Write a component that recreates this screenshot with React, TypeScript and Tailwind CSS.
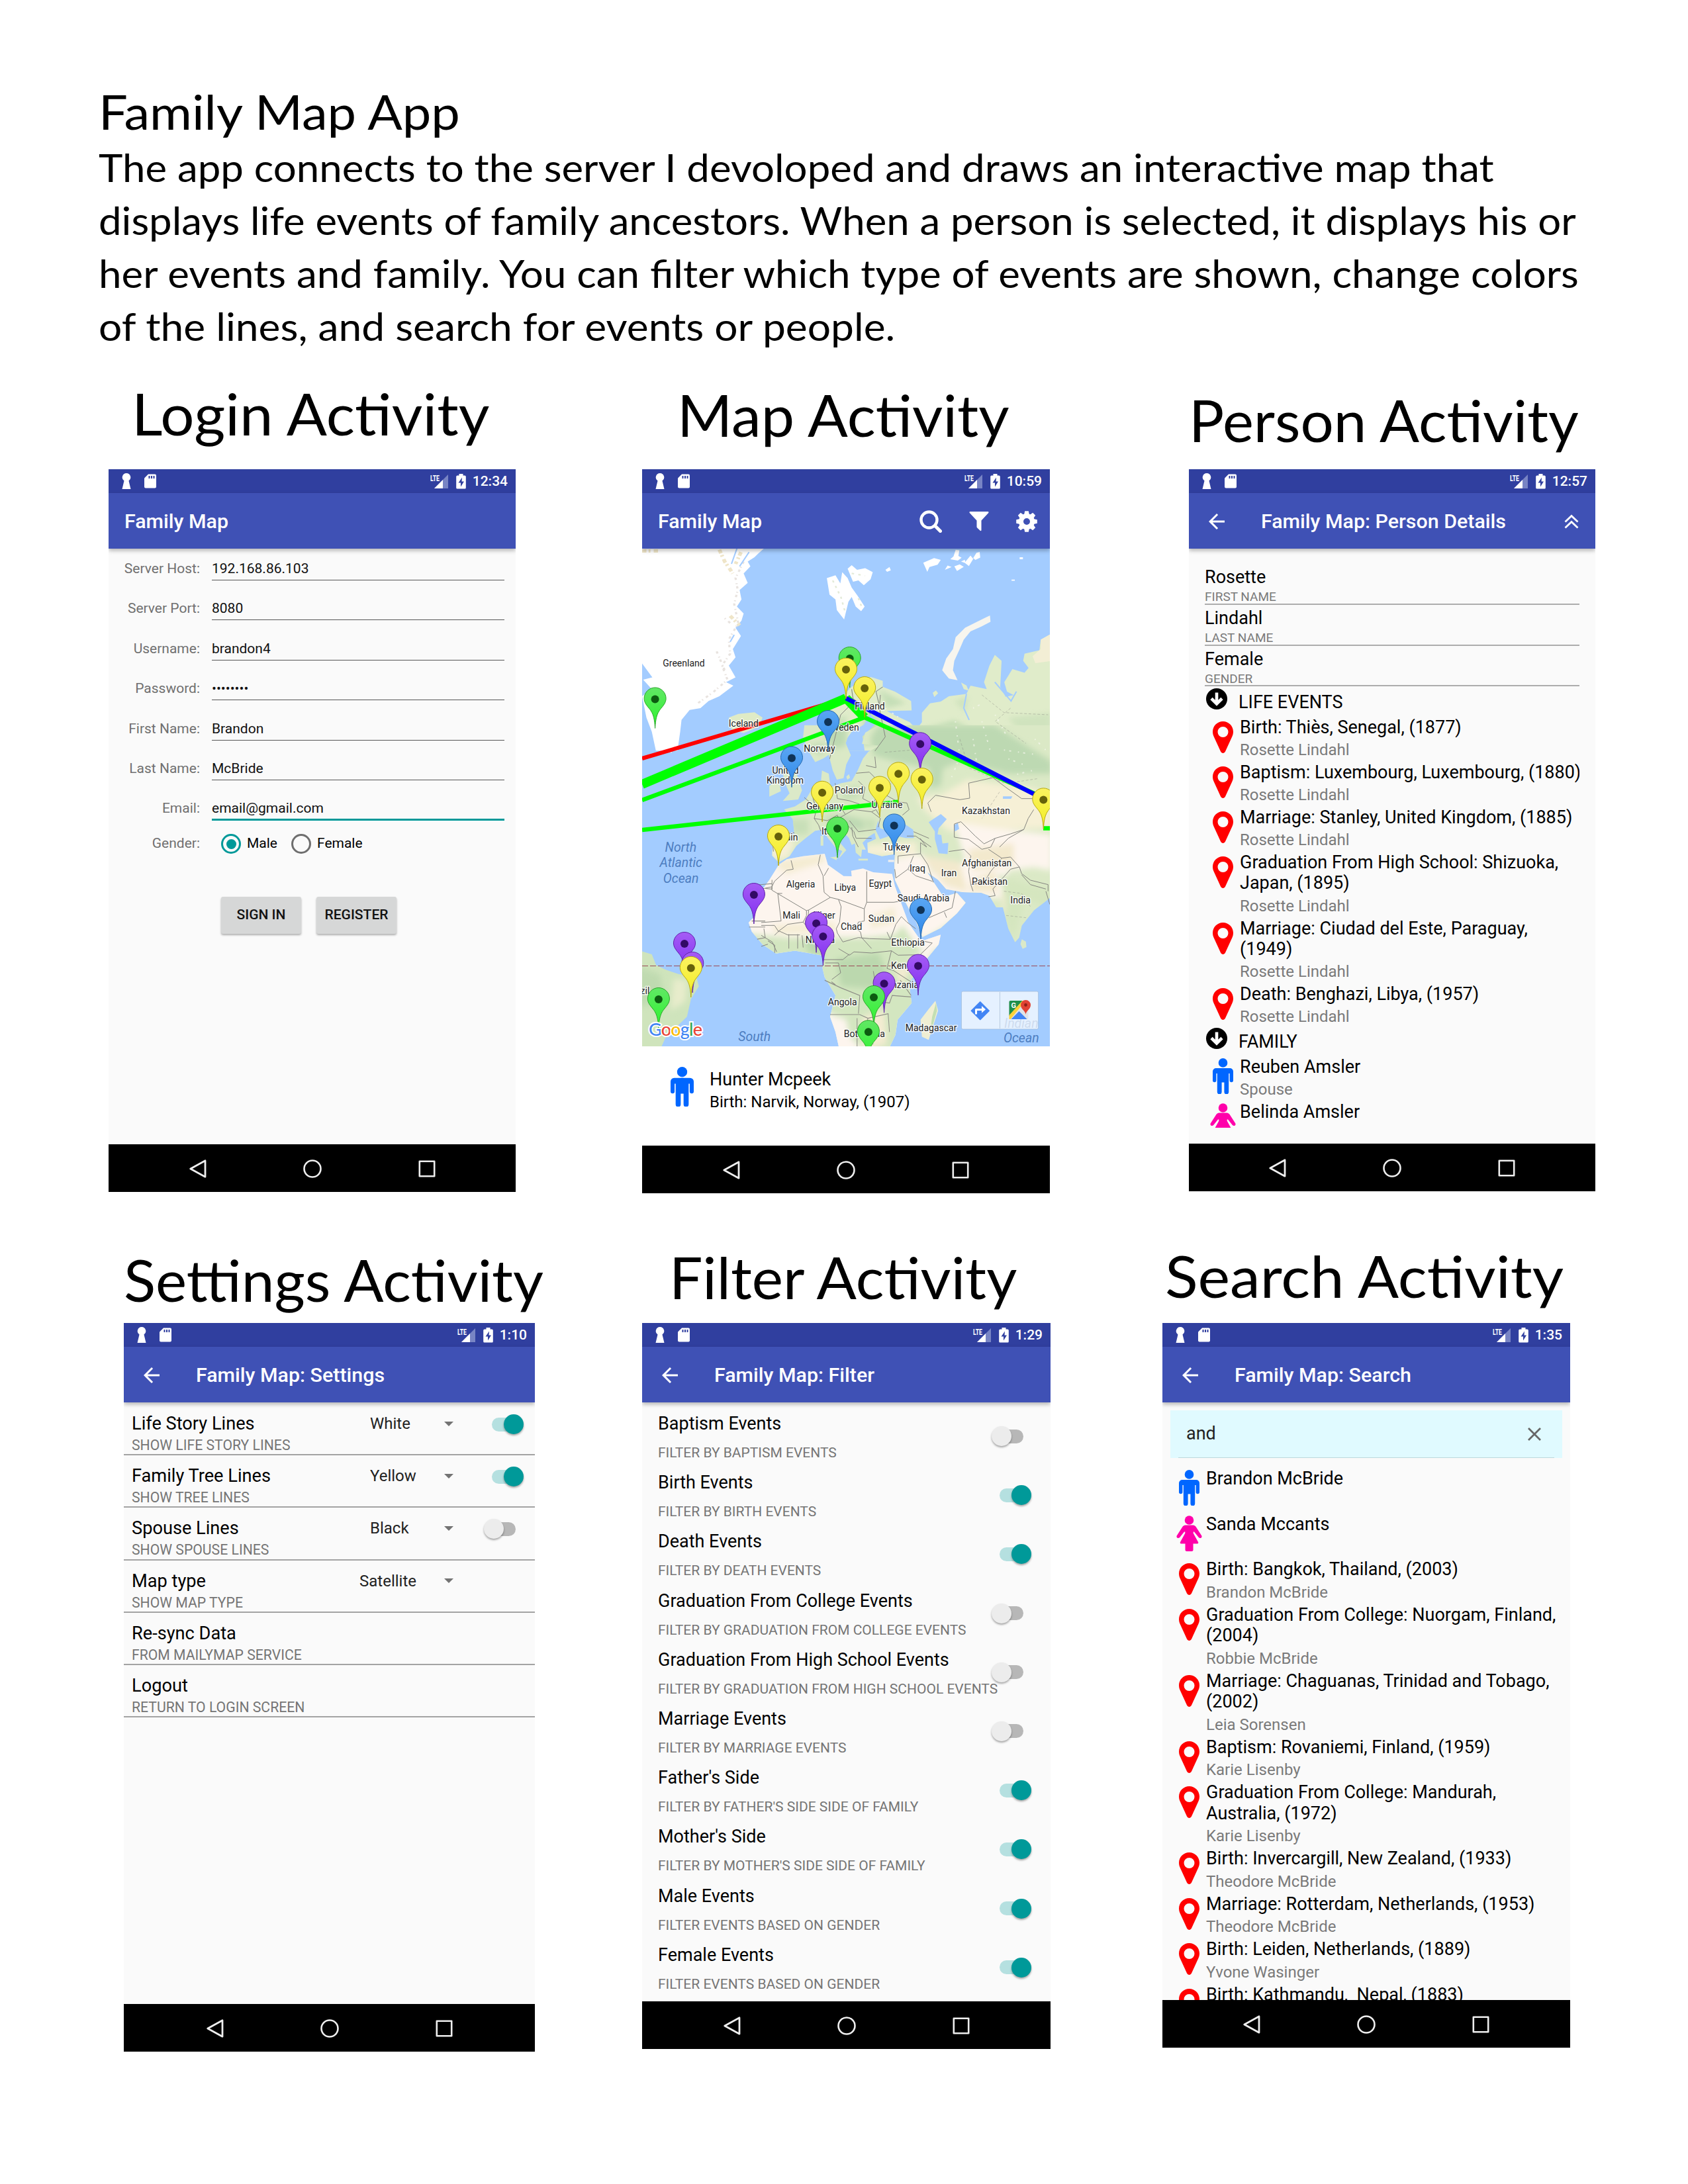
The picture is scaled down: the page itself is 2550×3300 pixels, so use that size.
import { useLayoutEffect, useRef, useState, type ReactNode } from "react";
import { MdArrowBack } from "react-icons/md";

/* Text squeezed or stretched horizontally so that it fills exactly `width` pixels. */
function FitText({ width, children }: { width: number; children: string }) {
  const ref = useRef<HTMLSpanElement>(null);
  const [scale, setScale] = useState(1);
  useLayoutEffect(() => {
    if (ref.current) setScale(width / ref.current.offsetWidth);
  }, [width]);
  return (
    <span ref={ref} className="inline-block origin-left whitespace-nowrap" style={{ transform: `scaleX(${scale})` }}>
      {children}
    </span>
  );
}

/* ---------- icons ---------- */

function Man({ className }: { className: string }) {
  return (
    <svg viewBox="0 0 31 54" preserveAspectRatio="none" className={className} fill="#0066ff">
      <circle cx="15.500" cy="6.900" r="6.800" />
      <path d="M5 15H26A5 5 0 0 1 31 20V33.500A2.600 2.600 0 0 1 25.600 33.500V23H24.200V51A3.300 3.300 0 0 1 17.400 51V36.500H16.200H14.800H13.600V51A3.300 3.300 0 0 1 6.800 51V23H5.400V33.500A2.600 2.600 0 0 1 0 33.500V20A5 5 0 0 1 5 15Z" />
      <path d="M13.500 15h4v21h-4z" />
    </svg>
  );
}

function Woman({ className }: { className: string }) {
  return (
    <svg viewBox="0 0 39 54" className={className} fill="#ff00aa">
      <circle cx="19.500" cy="7" r="6.800" />
      <path d="M14 14.500h11c2.500 0 4 1.500 5.300 3.500L38 30c2 3-2 5.600-4.200 3L27 24.500h-1.300v2.200L33 40c.6 1.200.1 2.500-1 2.500h-6.500V52c0 1.200-1 2-2.300 2h-7.400c-1.300 0-2.300-.8-2.300-2v-9.500H7c-1.100 0-1.600-1.300-1-2.500l7.300-13.300v-2.200H12L5.200 33C3 35.600-1 33 1 30l7.700-12c1.300-2 2.800-3.500 5.300-3.500z" />
    </svg>
  );
}

function Marker({ className }: { className: string }) {
  return (
    <svg viewBox="0 0 31 48" className={className} fill="#ff0000" fillRule="evenodd">
      <path d="M15.500 0C24 0 31 7 31 15.500c0 3-.6 5-1.700 7.500L19 45.500c-1.500 3.200-5.500 3.200-7 0L1.700 23C.6 20.500 0 18.500 0 15.500 0 7 7 0 15.500 0zm0 8a8 8 0 1 0 0 16 8 8 0 0 0 0-16z" />
    </svg>
  );
}

function ArrowCircle({ className }: { className: string }) {
  return (
    <svg viewBox="0 0 32 32" className={className}>
      <circle cx="16" cy="16" r="16" fill="#000" />
      <path d="M16 6.500V23M8 15.500l8 8 8-8" fill="none" stroke="#fff" strokeWidth="4.600" />
    </svg>
  );
}

function SearchIcon() {
  return (
    <svg viewBox="0 0 34 34" className="size-[34px]" fill="none" stroke="#fff" strokeLinecap="round">
      <circle cx="14.500" cy="14.500" r="12" strokeWidth="4.400" />
      <path d="M23.500 23.500l8 8" strokeWidth="5" />
    </svg>
  );
}

function FunnelIcon() {
  return (
    <svg viewBox="0 0 30 31" className="h-[31px] w-[30px]" fill="#fff">
      <path d="M1.500 1h27c1 0 1.400 1.200.7 2L18.500 14.500V29c0 1-1 1.500-1.800.8l-4.500-4.300a2 2 0 0 1-.7-1.500v-9.500L.8 3C.1 2.200.5 1 1.500 1z" />
    </svg>
  );
}

function GearIcon() {
  return (
    <svg viewBox="-16 -16 32 32" className="size-[32px]" fill="#fff">
      {[0, 45, 90, 135, 180, 225, 270, 315].map((a) => (
        <path key={a} transform={`rotate(${a})`} d="M-4.200 -9L-2.800 -15.800H2.800L4.200 -9z" />
      ))}
      <path fillRule="evenodd" d="M0-12a12 12 0 1 0 0 24 12 12 0 0 0 0-24zm0 7a5 5 0 1 1 0 10A5 5 0 0 1 0-5z" />
    </svg>
  );
}

function DoubleUp() {
  return (
    <svg viewBox="0 0 22 22" className="size-[22px]" fill="none" stroke="#fff" strokeWidth="2.800">
      <path d="M1.500 11.500L11 2.500l9.500 9M1.500 20.500l9.500-9 9.500 9" />
    </svg>
  );
}

/* ---------- phone frame ---------- */

function StatusBar({ time }: { time: string }) {
  return (
    <div className="flex h-[36px] shrink-0 items-center bg-[#303f9f] pl-[20px] pr-[12px] text-white">
      <svg viewBox="0 0 14 24" className="h-[24px] w-[14px]" fill="#fff">
        <path d="M7 0a6.300 6.300 0 0 1 3.500 11.500L13.500 24H.5L3.500 11.500A6.300 6.300 0 0 1 7 0z" />
      </svg>
      <svg viewBox="0 0 18 21" className="ml-[20px] h-[22px] w-[18px]">
        <path d="M6 0h10a2 2 0 0 1 2 2v17a2 2 0 0 1-2 2H2a2 2 0 0 1-2-2V6z" fill="#fff" />
        <path d="M7.500 2.500v4M11 2.500v4M14.500 2.500v4" stroke="#303f9f" strokeWidth="2" />
      </svg>
      <svg viewBox="0 0 28 23" className="ml-auto h-[23px] w-[28px] overflow-visible">
        <path d="M27 1v21H6z" fill="#7884c4" />
        <path d="M19 9v13H6z" fill="#fff" />
        <text x="0" y="10.500" textLength="14" lengthAdjust="spacingAndGlyphs" fill="#fff" fontFamily="Roboto" fontWeight="700" fontSize="13">
          LTE
        </text>
      </svg>
      <svg viewBox="0 0 15 23" className="ml-[11px] h-[23px] w-[15px]">
        <path d="M4.500 0h6v2.500H13a1.800 1.800 0 0 1 1.800 1.800V21a1.500 1.500 0 0 1-1.500 1.500H1.700A1.500 1.500 0 0 1 .2 21V4.300A1.800 1.800 0 0 1 2 2.500h2.500z" fill="#fff" />
        <path d="M9 5.500L3.500 13.500H7V19.500L12 11.500H8.500z" fill="#303f9f" />
      </svg>
      <span className="ml-[10px] text-[21px] font-medium leading-[36px]">{time}</span>
    </div>
  );
}

function NavBar() {
  return (
    <div className="flex h-[72px] shrink-0 items-center justify-center gap-[145px] bg-black pt-px">
      <svg viewBox="0 0 28 28" className="size-[28px]" fill="none" stroke="#eee" strokeWidth="2.800" strokeLinejoin="round">
        <path d="M25 1.800v24.400L2.800 14z" />
      </svg>
      <svg viewBox="0 0 28 28" className="size-[28px]" fill="none" stroke="#eee" strokeWidth="2.600">
        <circle cx="14" cy="14" r="12.500" />
      </svg>
      <svg viewBox="0 0 28 28" className="size-[28px]" fill="none" stroke="#eee" strokeWidth="2.600" strokeLinejoin="round">
        <rect x="2.800" y="2.800" width="22.400" height="22.400" />
      </svg>
    </div>
  );
}

function Phone({ size, time, title, back, actions, children }: {
  size: string;
  time: string;
  title: string;
  back?: boolean;
  actions?: ReactNode;
  children: ReactNode;
}) {
  return (
    <div className={`flex flex-col overflow-hidden bg-[#fafafa] ${size}`}>
      <StatusBar time={time} />
      <div className="relative z-10 flex h-[84px] shrink-0 items-center bg-[#3f51b5] pl-[24px] pt-px shadow-[0_3px_6px_rgba(0,0,0,0.28)]">
        {back && <MdArrowBack className="mr-[49px] size-[36px] text-white" />}
        <h3 className="text-[30.400px] font-medium leading-[36px] text-white">{title}</h3>
        <div className="ml-auto flex items-center">{actions}</div>
      </div>
      <div className="flex min-h-0 flex-1 flex-col overflow-hidden">{children}</div>
      <NavBar />
    </div>
  );
}

function Activity({ title, width, className, titleClass, children }: {
  title: string;
  width: number;
  className: string;
  titleClass: string;
  children: ReactNode;
}) {
  return (
    <section className={`shrink-0 ${className}`}>
      <h2 className={`h-[149px] font-[Lato,sans-serif] text-[87px] leading-[120px] ${titleClass}`}>
        <FitText width={width}>{title}</FitText>
      </h2>
      {children}
    </section>
  );
}

/* ---------- login ---------- */

const loginFields = [
  ["Server Host:", "192.168.86.103"],
  ["Server Port:", "8080"],
  ["Username:", "brandon4"],
  ["Password:", "••••••••"],
  ["First Name:", "Brandon"],
  ["Last Name:", "McBride"],
  ["Email:", "email@gmail.com"],
];

function Radio({ on }: { on?: boolean }) {
  return (
    <span className={`flex size-[30px] items-center justify-center rounded-full border-[3px] ${on ? "border-[#009999]" : "border-[#6e6e6e]"}`}>
      {on && <span className="size-[15px] rounded-full bg-[#009999]" />}
    </span>
  );
}

function Login() {
  return (
    <div className="text-[21px]">
      {loginFields.map(([label, value], i) => (
        <div key={label} className="flex h-[60.400px] items-start">
          <div className="w-[138px] pt-[18px] text-right leading-[24px] text-[#707070]">{label}</div>
          <div
            className={`ml-[18px] w-[442px] pt-[18px] leading-[24px] text-[#111] ${
              i === 6 ? "border-b-[3px] border-[#009999] pb-[4px]" : "border-b border-[#555] pb-[5px]"
            } ${i === 3 ? "text-[20.500px]" : ""}`}
          >
            {value}
          </div>
        </div>
      ))}
      <div className="flex h-[46px] items-center pt-px">
        <div className="w-[138px] text-right text-[#707070]">Gender:</div>
        <div className="ml-[32px] flex items-center gap-[9px]">
          <Radio on />
          Male
        </div>
        <div className="ml-[21px] flex items-center gap-[9px]">
          <Radio />
          Female
        </div>
      </div>
      <div className="mt-[57px] flex gap-[23px] pl-[170px]">
        {["SIGN IN", "REGISTER"].map((t) => (
          <button key={t} className="h-[56px] w-[121px] rounded-[3px] bg-[#d6d7d7] pt-px font-medium text-[#111] shadow-[0_2px_3px_rgba(0,0,0,0.3)]">
            {t}
          </button>
        ))}
      </div>
    </div>
  );
}

/* ---------- map ---------- */

type Pin = [color: string, x: number, y: number];

const pins: Pin[] = [
  ["green", 19.6, 227.4], ["green", 313.7, 166], ["yellow", 308, 182.7], ["yellow", 336.2, 211], ["blue", 281, 262],
  ["purple", 420.2, 295.3], ["blue", 226, 316.5], ["yellow", 387.2, 340.3], ["yellow", 422.7, 349], ["yellow", 359, 361.5],
  ["yellow", 272.1, 368.8], ["yellow", 606.3, 379.4], ["blue", 380.7, 418.4], ["green", 295, 423], ["yellow", 206, 435],
  ["purple", 168.9, 523], ["blue", 421, 546], ["purple", 263.1, 566.3], ["purple", 273.4, 586], ["purple", 64, 597],
  ["purple", 76.3, 627], ["purple", 417, 630.6], ["yellow", 73.8, 633.8], ["purple", 365.6, 657.2], ["green", 350, 677.9],
  ["green", 24.9, 681], ["green", 341.9, 730.2],
];

const pinFill: Record<string, string> = { green: "url(#pg)", yellow: "url(#py)", blue: "url(#pb)", purple: "url(#pp)" };
const pinEdge: Record<string, string> = { green: "#2aa52a", yellow: "#b5a80f", blue: "#2468ae", purple: "#5f22a8" };
const pinDot: Record<string, string> = { green: "#0c5c10", yellow: "#66610a", blue: "#0f3357", purple: "#330a66" };

const labels: [string, number, number][] = [
  ["Greenland", 63, 172.7], ["Iceland", 153.4, 264], ["Finland", 344, 237.7], ["Sweden", 303, 269.5], ["Norway", 268, 302],
  ["United", 216.6, 335], ["Kingdom", 216, 350], ["Poland", 312.5, 365], ["Germany", 276, 389], ["Ukraine", 370, 386.7],
  ["Kazakhstan", 519.4, 396.4], ["Spain", 218, 436], ["Italy", 284, 427], ["Turkey", 384, 451], ["Iraq", 416, 482.7],
  ["Iran", 463.5, 490], ["Afghanistan", 520.6, 475.3], ["Pakistan", 525, 503], ["Algeria", 239.5, 506.6], ["Libya", 306.8, 511.6],
  ["Egypt", 359.8, 505.7], ["Saudi Arabia", 425, 528], ["India", 571.6, 531.4], ["Mali", 225.6, 554.3], ["Niger", 275, 554.3],
  ["Sudan", 361.5, 558.5], ["Chad", 316.2, 571.3], ["Ethiopia", 401.5, 594.7], ["Nigeria", 269, 591], ["Kenya", 395, 629.6],
  ["Tanzania", 390, 658.6], ["Angola", 302.7, 684.7], ["Madagascar", 436.6, 724.2], ["Botswana", 335.8, 733], ["Brazil", -6, 667.8],
];

const oceans: [string, number, number][] = [
  ["North", 58.3, 451], ["Atlantic", 58.7, 474.4], ["Ocean", 58.7, 497.8], ["South", 169.7, 736.6], ["Atlantic", 169, 760],
  ["Indian", 572.8, 717.3], ["Ocean", 572.8, 739.4],
];

function WorldMap() {
  return (
    <svg viewBox="0 0 616 752" className="h-[752px] w-[616px] shrink-0 bg-[#a3ccff]" fontFamily="Roboto">
      <defs>
        <linearGradient id="pg" x1="0" y1="0" x2="0" y2="1"><stop offset="0" stopColor="#61e765" /><stop offset="1" stopColor="#2cf52c" /></linearGradient>
        <linearGradient id="py" x1="0" y1="0" x2="0" y2="1"><stop offset="0" stopColor="#fbf260" /><stop offset="1" stopColor="#f2ee22" /></linearGradient>
        <linearGradient id="pb" x1="0" y1="0" x2="0" y2="1"><stop offset="0" stopColor="#5aa6f3" /><stop offset="1" stopColor="#2c86e8" /></linearGradient>
        <linearGradient id="pp" x1="0" y1="0" x2="0" y2="1"><stop offset="0" stopColor="#a55cf5" /><stop offset="1" stopColor="#7f2cf0" /></linearGradient>
        <filter id="soft" x="-20%" y="-20%" width="140%" height="140%"><feGaussianBlur stdDeviation="10" /></filter>
        <clipPath id="eurasia">
          <path d="M625 -10L620 30 640 75 665 112 695 100 715 88 730 140 745 170 770 165 780 120 797 90 778 50 800 -10 900 -10 850 15 838 52 905 58 862 78 842 100 822 140 800 175 760 182 722 195 715 150 690 140 685 190 650 205 630 235 590 258 550 268 582 300 588 350 518 343 508 352 505 420 530 442 570 422 595 388 630 362 665 338 692 335 712 362 742 395 765 405 750 432 780 402 740 360 725 325 745 320 790 362 800 385 812 380 815 410 835 425 838 400 852 400 840 378 862 358 885 345 890 365 858 378 860 410 912 422 960 415 958 450 960 500 1000 575 1040 640 1062 688 1130 658 1190 610 1222 575 1190 543 1140 556 1102 505 1080 475 1120 500 1150 530 1210 540 1280 542 1310 552 1335 590 1360 590 1380 660 1405 705 1420 690 1430 650 1475 600 1540 555V-10z" />
        </clipPath>
        <clipPath id="africa">
          <path d="M530 450L560 432 620 422 700 414 712 450 770 487 800 488 798 470 842 462 880 475 950 480 960 520 985 580 1010 640 1050 692 1070 698 1130 680 1122 712 1050 790 1012 840 1022 905 970 960 962 1010 935 1060 755 1060 740 1000 720 950 740 880 700 820 692 790 702 750 650 742 590 733 520 742 470 712 430 670 418 640 440 620 430 590 462 540 495 500z" />
        </clipPath>
      </defs>

      {/* northern land masses */}
      <g transform="translate(-9.800 -259) scale(.408 .3571)">
        <path fill="#fff" d="M0 720H480L455 745 440 762 415 780 425 800 400 830 415 870 385 900 392 940 375 970 400 1000 392 1030 370 1060 390 1095 360 1150 370 1185 345 1220 370 1270 335 1290 362 1305 310 1350 270 1370 240 1400 200 1408 170 1450 165 1500 155 1580H75L60 1500 40 1440 24 1350 60 1320 28 1280 62 1270 20 1205z" />
        <path fill="none" stroke="#e8e3df" strokeWidth="8" strokeDasharray="10 14 4 9" d="M400 780L370 850 378 900 365 960 380 1040 345 1110 350 1170 320 1220 340 1280 290 1330 230 1380M350 1040L330 1020M300 1160L330 1240" />
        <path fill="none" stroke="#efe5c8" strokeWidth="14" strokeDasharray="16 8 7 12" d="M310 730L330 780 360 830M390 740L370 790M350 1010L385 1050M24 735H90" />
        <path fill="none" stroke="#a3ccff" strokeWidth="5" d="M375 725L355 790M420 740L385 800M365 1090L350 1120M370 1240L350 1215" />
        <path fill="#fff" d="M708 850L740 838 758 872 765 825 785 850 800 890 822 925 848 970 835 990 815 970 800 930 788 950 772 1025 745 985 740 940 718 920zM785 810L800 795 820 815 850 808 878 825 870 855 845 880 825 860 805 865zM925 815l15-12 5 14-14 6zM1065 785l40-20 25 8-12 20-30 10-8 20zM1145 815l10-18 15 6zM1180 800l20-8 15 10-25 18zM1165 770l12-12 8-28 14 2-4 24 12 8-14 12zM1205 780l14-8 2 14zM1218 785l22-30 10 14-16 30zM1250 765l12-22 12-4 2 24-18 10zM1422 762h12v8h-12zM1392 856h12v5h-12z" />
        <path fill="none" stroke="#e3ead8" strokeWidth="6" strokeDasharray="9 16" d="M730 860L760 930 775 990M800 830L850 840M825 935L838 975" />
        <path fill="#f7f5ee" d="M1290 1020L1312 1008 1314 1035 1280 1055 1240 1075 1215 1110 1200 1150 1180 1200 1175 1240 1192 1282 1160 1275 1135 1240 1150 1190 1175 1150 1185 1100 1220 1060z" />
        <path fill="#dfebc6" d="M345 1440L380 1425 440 1418 470 1440 455 1480 400 1505 355 1490z" />
        <path fill="#e0ecca" d="M1540 1085L1500 1110 1495 1155 1440 1170 1435 1200 1455 1230 1440 1250 1395 1235 1365 1290 1375 1330 1400 1345 1370 1352 1350 1310 1355 1200 1330 1175 1310 1220 1290 1290 1300 1320 1240 1305 1225 1340 1160 1350 1130 1372 1090 1380 1060 1420 1060 1460 1040 1490 1015 1460 960 1430 930 1412 1022 1410 1020 1370 960 1330 915 1310 915 1285 870 1268 830 1290 800 1310 770 1345 740 1380 710 1420 680 1470 650 1500 622 1580H1540zM1100 1335l12-10 8 12-14 16zM1205 1292l20 12 8 22-18-6z" />
        <path fill="#f3eed5" d="M1540 1085L1500 1110 1500 1150 1470 1180 1480 1210 1540 1200z" />
        <g fill="#bfdbb3" opacity=".8" filter="url(#soft)">
          <path d="M1060 1490L1180 1450 1260 1500 1300 1580H930L960 1520zM840 1400L900 1420 940 1560H840zM690 1480L780 1430 760 1580H640zM900 1320L1000 1380 930 1400z" />
          <path d="M1380 1440L1540 1420V1500L1420 1500zM1180 1370L1230 1350 1220 1420z" opacity=".6" />
        </g>
        <path fill="#a3ccff" d="M868 1425L845 1470 800 1500 772 1545 775 1580H848L840 1520 895 1460z" />
        <path fill="none" stroke="#a3ccff" strokeWidth="5" d="M1330 1290L1390 1370 1410 1330M1225 1340l-10 60 20 50M985 1550l20 10" />
        <path fill="#a3ccff" d="M960 1545l14-4 6 14-16 6zM1000 1530l8-8 4 16z" />
        <path fill="none" stroke="#8b9488" strokeWidth="3" d="M915 1310L890 1330 905 1400M800 1320L805 1360 850 1400 870 1425" />
      </g>

      {/* southern land masses */}
      <g transform="translate(-9.800 271) scale(.408 .4592)">
        <path fill="#fff" d="M62 -10H165L155 40 132 82 100 62 75 30z" />
        <g clipPath="url(#eurasia)">
          <path fill="#dbe9c6" d="M400 -10H1540V760H400z" />
          <g filter="url(#soft)">
            <path fill="#bdd9b2" d="M900 -10H1330L1450 60 1540 110V150L1380 150 1200 110 1120 140 960 110 880 90 870 30zM700 -10H780V60L720 70zM690 295L760 285 840 300 850 340 720 310zM1090 130L1140 120 1130 190 1090 200zM640 60L700 50 690 90z" />
            <path fill="#c8dfb8" d="M560 300L640 300 640 350 590 350zM760 200L830 190 830 230 770 240zM830 300L890 300 880 350zM740 340L760 370 740 380z" />
            <path fill="#f6f0d6" d="M1130 220L1230 170 1480 200 1540 240V330L1160 340 1070 270 1040 230zM500 345L590 375 560 430H500zM850 385L1040 375V420H850z" />
            <path fill="#fdf5ee" d="M950 430L1060 415 1100 480 1110 440 1160 470 1220 440 1180 310 1320 330 1540 350V450L1380 470 1350 560 1230 560 1240 600 1060 700 940 500z" />
            <path fill="#f3e9cd" d="M1060 420L1200 440 1230 540 1150 520 1090 460zM1230 400L1400 380 1400 450 1250 470zM1240 500L1330 470 1340 540 1240 540z" />
            <path fill="#efecd0" d="M1350 540L1440 560 1400 640 1360 600z" />
            <path fill="#d5e6bf" d="M1340 480L1440 510 1540 530V600L1440 560 1400 700 1370 640 1370 560zM985 640L1060 690 1010 660z" />
            <path fill="#fdf5ee" d="M1400 370L1540 390V470L1430 450z" />
          </g>
        </g>
        <path fill="#a3ccff" d="M888 335L898 305 905 330 935 338 965 325 960 300 1000 318 1028 335 1030 362 1000 362 950 352 905 366zM1085 310L1130 283 1152 300 1122 330 1118 350 1132 352 1136 380 1158 378 1155 415 1122 412 1108 365 1108 340zM1178 320l15-8 5 20-16 8zM1360 225h35l-5 8h-30z" />
        <path fill="#dbe9c8" d="M545 110L572 88 585 130 600 160 616 205 602 235 545 240 570 215 548 170zM495 190L530 170 538 208 495 226zM1430 695l15 8 2 18-14 6-8-16zM685 355h10v32h-10zM825 430h35v6h-35zM720 425l28-2-4 12zM780 160l10-8 4 12-10 6z" />
        <path fill="#eee" d="M935 434h22v7h-22z" />
        <g clipPath="url(#africa)">
          <path fill="#fdf5ee" d="M400 400H1140V1060H400z" />
          <g filter="url(#soft)">
            <path fill="#d3e6c0" d="M400 675L560 690 740 690 850 690 960 680 990 650 1040 720 1140 730V1060H840L720 940 600 800 400 740z" />
            <path fill="#bbd8ae" d="M740 760L900 740 930 800 900 860 760 850zM620 690L680 690 700 760 640 740z" />
            <path fill="#fdf5ee" d="M1050 690H1140L1060 790 1010 770 1060 740z" />
            <path fill="#f4ecd2" d="M500 440L700 415V440L560 480zM500 650L740 640 740 670 520 675zM870 620L960 590 960 640 870 660zM960 780L1020 790 980 850zM840 950L920 930 930 1040 840 1060z" />
            <path fill="#fdf5ee" d="M715 940L780 960 800 1060H730z" />
          </g>
        </g>
        <path fill="#f0efd3" d="M1110 898L1120 930 1100 985 1085 1026 1060 1016 1055 960 1085 925z" />
        <path fill="#c3dfb3" d="M1112 905L1116 930 1098 985 1090 1000 1098 950z" />
        <path fill="#cfe4bc" d="M0 728L60 745 76 780 110 795 160 810 225 818 234 850 205 892 190 950 150 985 110 1020 90 1060H0z" />
        <path fill="#e7eccb" filter="url(#soft)" d="M140 825L190 830 185 900 130 930z" />
        <path fill="#b9d7ac" opacity=".7" filter="url(#soft)" d="M0 780L90 810 110 900 0 920z" />
        <path fill="none" stroke="#8d8d86" strokeWidth="2.500" d="M505 500V530L480 528M505 512L455 516M480 635H430M420 655H480M475 660L480 690 450 695M515 740V715L490 700M700 830L760 855 830 880 825 940M720 943H830L860 955 935 940 940 1000M880 800L890 850 870 870 900 900M820 955V1048M725 835L740 845M980 830L1020 880M860 955L850 1000 880 1040M900 900L940 905 950 880 1020 885" />
      </g>

      {/* country borders of Europe, North Africa and Asia */}
      <g transform="translate(180 221) scale(.3333)" fill="none" stroke="#85857f" strokeWidth="3" strokeLinejoin="round">
        <path d="M135 750L145 790 115 795 60 845 48 870V885L205 978 215 975 313 918 285 895 280 820 258 770 268 725M305 785L285 820M313 918L350 927 467 970 478 940V800M478 940H600L630 935M467 970V1025L440 1030 430 1060 450 1075 455 1100M48 870L0 880M75 900H95M75 900L90 1025 0 1032M205 978V1000L190 1030 120 1040 80 1070 60 1090M350 927L362 960 355 1030 340 1060 345 1080 370 1120 440 1100 490 1105 585 1108 570 1075M215 975L210 1030M190 1030L215 1060" />
        <path d="M0 1090L50 1120 70 1165M0 1045L60 1045 80 1075M125 1085V1150M165 1085V1150M185 1090L190 1145M80 1070L120 1088H175M30 1130L0 1140M350 1150L400 1180 420 1165 500 1170 590 1160 620 1180 720 1178 775 1125 730 1115M585 1108L610 1040 635 1005 660 1030 700 1060M280 1200H370L400 1175M290 1215H350L360 1260 320 1290M720 1178L715 1230M590 1160L570 1240 600 1250 690 1308M455 1100L500 1150" />
        <path d="M390 10L400 50 360 90 345 150 330 210 310 290M540 0L535 60 562 190 515 255M515 280L520 330 475 320M430 355L490 350 520 380 500 400M440 390L470 420 460 470 500 490M335 400L345 470 400 480 445 495M230 420L235 470 250 520 240 560 300 570 345 545M195 465L235 500M240 560L260 590 270 618M345 545L350 560 420 520 500 530 540 560 530 600M400 570L440 620 520 610M375 575L420 620 430 650 500 650M355 500L380 540M410 600L415 640 440 690M500 500L520 470 540 440 620 485 660 490 670 520 640 545M500 530L520 520 535 545M100 630L150 625M50 650L55 710" />
        <path d="M770 530L755 490 790 455 900 475 945 468 940 400 1050 375 1110 420 1180 470 1235 470M1235 520L1210 560 1190 610 1130 630 1060 650 1010 675 970 640 905 575 875 585V645L940 655 1000 700 1040 690 1060 650M850 710L920 700 950 730 940 800 950 860 1010 850 1040 800 1090 740 1030 700M950 860L960 890M1090 740L1130 735 1170 780 1130 790 1050 880 1060 910 1030 915M1170 780L1180 810 1220 840 1300 860V890M1180 815L1220 860 1290 880M1190 610L1120 650 1080 690" />
        <path d="M690 620L760 650M720 650L750 690 722 670V720L620 730V765M722 720L755 770 780 850M690 730L665 790 610 830 605 790M665 790L700 820 775 845M760 1010L865 965 880 890M830 985L840 1010M1290 890L1308 950M660 640L700 640 770 690" />
        <path strokeDasharray="12 8" strokeOpacity=".5" strokeWidth="2.500" d="M900 200L940 330 1100 400M560 260L680 250M1130 60L1060 120 1200 220M1000 0L1100 80 1300 90M1120 400L1250 380M1100 890L1180 900 1220 960M1110 1000L1200 1010M1080 440L1000 560M520 420L600 400" />
      </g>
      {/* snowy and hilly speckles */}
      <g transform="translate(180 221) scale(.3333)" fill="none" stroke="#f6f8ee" strokeWidth="6" strokeDasharray="5 19 9 31" strokeOpacity=".7">
        <path d="M240 190L300 180 290 230M620 100L560 60M880 120L900 280 860 380M1000 120L1040 260M960 200L980 330M1100 250L1240 270M1120 290L1200 320M960 60L1000 40M1060 90L1120 200M1240 200L1300 260M1160 360L1240 340" />
      </g>

      <path d="M0 630.500H616" stroke="#9b4a57" strokeWidth="1.200" strokeDasharray="9 3" />

      {/* relationship lines */}
      <g fill="none">
        <path d="M308 226L0 317" stroke="#ff0000" strokeWidth="6" />
        <path d="M336 255L0 380M388 382.600L0 425M336 255L597 372M606 422.500H616" stroke="#00ff00" strokeWidth="6.500" />
        <path d="M308 226L0 356M308 226L336 255" stroke="#00ff00" strokeWidth="14" />
        <path d="M308 226L606 378" stroke="#0000ff" strokeWidth="6.500" />
      </g>

      <g textAnchor="middle" paintOrder="stroke" stroke="#ffffff" strokeOpacity=".75" strokeWidth="3" strokeLinejoin="round">
        <g fontSize="14" fill="#222">
          {labels.map(([t, x, y]) => (
            <text key={t} x={x} y={y + 5}>{t}</text>
          ))}
        </g>
      </g>
      <g textAnchor="middle" fontSize="19.500" fontStyle="italic" fill="#4d7dbf">
        {oceans.map(([t, x, y]) => (
          <text key={`${t}${y}`} x={x} y={y + 7}>{t}</text>
        ))}
      </g>

      {pins.map(([c, x, y]) => (
        <g key={`${x}-${y}`} transform={`translate(${x} ${y})`}>
          <path d="M0 44C-1 26 -4 20 -9 14C-13 9 -16.500 5 -16.500 -1A16.500 16.500 0 0 1 16.500 -1C16.500 5 13 9 9 14C4 20 1 26 0 44z" fill={pinFill[c]} stroke={pinEdge[c]} strokeWidth="1" />
          <circle r="6" fill={pinDot[c]} />
        </g>
      ))}

      <text x="10" y="736" fontFamily="Lato" fontSize="27" fontWeight="500" textLength="81" stroke="#fff" strokeWidth="4" paintOrder="stroke">
        <tspan fill="#4285f4">G</tspan><tspan fill="#ea4335">o</tspan><tspan fill="#fbbc05">o</tspan><tspan fill="#4285f4">g</tspan><tspan fill="#34a853">l</tspan><tspan fill="#ea4335">e</tspan>
      </text>

      {/* directions and open-in-maps buttons */}
      <rect x="482.500" y="669" width="116" height="57" rx="2" fill="#fff" fillOpacity=".72" stroke="#9fb6cf" strokeOpacity=".6" />
      <path d="M540.500 670V725" stroke="#b9cbe0" />
      <path d="M511.500 684.500L524.500 697.500a1 1 0 0 1 0 1.500L511.500 712a1 1 0 0 1-1.500 0L497 699a1 1 0 0 1 0-1.500L510 684.500a1 1 0 0 1 1.500 0z" fill="#4285f4" />
      <path d="M506 703.500V698H513V701.500L519 696.200 513 691V695H504.500Q503 695 503 696.500V703.500z" fill="#fff" />
      <g transform="translate(554.500 682)">
        <rect y="1" width="29" height="28" rx="2" fill="#dfe3e8" />
        <path d="M2 1H22L0 24V3a2 2 0 0 1 2-2z" fill="#1e8e4a" />
        <path d="M0 23L20 1H25L2 29H0z" fill="#fdd13a" />
        <path d="M3 29L15 17 27 29z" fill="#4285f4" />
        <path d="M25 22c-.6-6-7.500-8-7.500-14.500a7.500 7.500 0 0 1 15 0C32.500 14 25.600 16 25 22z" fill="#e04334" />
        <circle cx="25" cy="7.500" r="2.400" fill="#8e1f16" />
        <text x="3" y="12" fontSize="11" fontWeight="700" fill="#fff">G</text>
      </g>
    </svg>
  );
}

function MapScreen() {
  return (
    <div className="flex flex-1 flex-col bg-white">
      <WorldMap />
      <div className="flex pl-[43px] pt-[31px]">
        <Man className="h-[60px] w-[35px]" />
        <div className="ml-[24px]">
          <p className="text-[27px] leading-[38px]">Hunter Mcpeek</p>
          <p className="text-[24px] leading-[30px]">Birth: Narvik, Norway, (1907)</p>
        </div>
      </div>
    </div>
  );
}

/* ---------- lists shared by person and search ---------- */

type Item = { icon: "man" | "woman" | "marker"; title: string; sub?: string };

function ListItem({ item, tall }: { item: Item; tall?: boolean }) {
  return (
    <div className="flex items-start">
      <div className="flex w-[50px] shrink-0 justify-center">
        {item.icon === "man" && <Man className="mt-[2px] h-[54px] w-[31px]" />}
        {item.icon === "woman" && <Woman className="mt-[2px] h-[54px] w-[39px]" />}
        {item.icon === "marker" && <Marker className="mt-[6px] h-[48px] w-[31px]" />}
      </div>
      <div className="pl-px">
        <p className={`whitespace-pre text-[27px] ${tall ? "leading-[31.500px]" : "leading-[31.200px]"}`}>{item.title}</p>
        <p className="h-[37px] text-[24px] leading-[37px] text-[#7a7a7a]">{item.sub}</p>
      </div>
    </div>
  );
}

const lifeEvents: Item[] = [
  "Birth: Thiès, Senegal, (1877)",
  "Baptism: Luxembourg, Luxembourg, (1880)",
  "Marriage: Stanley, United Kingdom, (1885)",
  "Graduation From High School: Shizuoka,\nJapan, (1895)",
  "Marriage: Ciudad del Este, Paraguay,\n(1949)",
  "Death: Benghazi, Libya, (1957)",
].map((title) => ({ icon: "marker", title, sub: "Rosette Lindahl" }));

const family: Item[] = [
  { icon: "man", title: "Reuben Amsler", sub: "Spouse" },
  { icon: "woman", title: "Belinda Amsler", sub: "Child" },
];

function Group({ title, items }: { title: string; items: Item[] }) {
  return (
    <div>
      <div className="flex h-[41.700px] pl-[2px]">
        <ArrowCircle className="-mt-[2px] size-[32px]" />
        <h4 className="ml-[17px] text-[27px] leading-[38px]">{title}</h4>
      </div>
      {items.map((it) => (
        <div key={it.title} className="pl-[2px]">
          <ListItem item={it} />
        </div>
      ))}
    </div>
  );
}

function Person() {
  return (
    <div className="mx-[24px] mt-[23px] h-[852px] overflow-hidden">
      {[["Rosette", "FIRST NAME"], ["Lindahl", "LAST NAME"], ["Female", "GENDER"]].map(([value, label]) => (
        <div key={label} className="h-[61.800px] border-b-2 border-[#adadad] pt-[2px]">
          <p className="text-[27px] leading-[36px]">{value}</p>
          <p className="text-[19px] leading-[23px] text-[#7a7a7a]">{label}</p>
        </div>
      ))}
      <div className="pt-[4.500px]">
        <Group title="LIFE EVENTS" items={lifeEvents} />
        <Group title="FAMILY" items={family} />
      </div>
    </div>
  );
}

/* ---------- settings and filter ---------- */

function Switch({ on }: { on: boolean }) {
  return (
    <div className={`flex h-[30px] w-[60px] items-center ${on ? "justify-end" : "justify-start"}`}>
      {on && <span className="-mr-[18px] h-[21px] w-[36px] rounded-full bg-[#b5e0e0]" />}
      <span className={`relative z-10 size-[30px] shrink-0 rounded-full shadow-[0_2px_3px_rgba(0,0,0,0.35)] ${on ? "bg-[#009999]" : "bg-[#ececec]"}`} />
      {!on && <span className="-ml-[18px] h-[21px] w-[36px] rounded-full bg-[#b7b7b7]" />}
    </div>
  );
}

const settings: { title: string; sub: string; value?: string; on?: boolean }[] = [
  { title: "Life Story Lines", sub: "SHOW LIFE STORY LINES", value: "White", on: true },
  { title: "Family Tree Lines", sub: "SHOW TREE LINES", value: "Yellow", on: true },
  { title: "Spouse Lines", sub: "SHOW SPOUSE LINES", value: "Black", on: false },
  { title: "Map type", sub: "SHOW MAP TYPE", value: "Satellite" },
  { title: "Re-sync Data", sub: "FROM MAILYMAP SERVICE" },
  { title: "Logout", sub: "RETURN TO LOGIN SCREEN" },
];

function Settings() {
  return (
    <div className="pt-px">
      {settings.map((s) => (
        <div key={s.title} className="flex h-[79.200px] border-b-2 border-[#a3a3a3] pl-[12px] pr-[17px]">
          <div className="w-[344px] shrink-0 pt-[13px]">
            <p className="text-[27.200px] leading-[37px]">{s.title}</p>
            <p className="whitespace-nowrap text-[21.200px] leading-[28px] text-[#757575]">{s.sub}</p>
          </div>
          {s.value && (
            <div className={`flex h-[62px] items-center text-[24px] text-[#222] ${s.on === undefined ? "w-[142px]" : "ml-[16px] w-[126px]"}`}>
              {s.value}
              <span className="ml-auto border-x-[7.500px] border-t-[7.500px] border-x-transparent border-t-[#737373]" />
            </div>
          )}
          {s.on !== undefined && (
            <div className="ml-auto pt-[17px]">
              <Switch on={s.on} />
            </div>
          )}
        </div>
      ))}
    </div>
  );
}

const filters: [string, string, boolean][] = [
  ["Baptism Events", "FILTER BY BAPTISM EVENTS", false],
  ["Birth Events", "FILTER BY BIRTH EVENTS", true],
  ["Death Events", "FILTER BY DEATH EVENTS", true],
  ["Graduation From College Events", "FILTER BY GRADUATION FROM COLLEGE EVENTS", false],
  ["Graduation From High School Events", "FILTER BY GRADUATION FROM HIGH SCHOOL EVENTS", false],
  ["Marriage Events", "FILTER BY MARRIAGE EVENTS", false],
  ["Father's Side", "FILTER BY FATHER'S SIDE SIDE OF FAMILY", true],
  ["Mother's Side", "FILTER BY MOTHER'S SIDE SIDE OF FAMILY", true],
  ["Male Events", "FILTER EVENTS BASED ON GENDER", true],
  ["Female Events", "FILTER EVENTS BASED ON GENDER", true],
];

function Filter() {
  return (
    <div>
      {filters.map(([title, sub, on]) => (
        <div key={title} className="flex h-[89.200px] pl-[24px] pr-[29px]">
          <div className="w-[504px] shrink-0 pt-[14px]">
            <p className="text-[27px] leading-[36px]">{title}</p>
            <p className="mt-[12px] whitespace-nowrap text-[21px] leading-[28px] text-[#757575]">{sub}</p>
          </div>
          <div className="pt-[36px]">
            <Switch on={on} />
          </div>
        </div>
      ))}
    </div>
  );
}

/* ---------- search ---------- */

const results: Item[] = [
  { icon: "man", title: "Brandon McBride" },
  { icon: "woman", title: "Sanda Mccants" },
  { icon: "marker", title: "Birth: Bangkok, Thailand, (2003)", sub: "Brandon McBride" },
  { icon: "marker", title: "Graduation From College: Nuorgam, Finland,\n(2004)", sub: "Robbie McBride" },
  { icon: "marker", title: "Marriage: Chaguanas, Trinidad and Tobago,\n(2002)", sub: "Leia Sorensen" },
  { icon: "marker", title: "Baptism: Rovaniemi, Finland, (1959)", sub: "Karie Lisenby" },
  { icon: "marker", title: "Graduation From College: Mandurah,\nAustralia, (1972)", sub: "Karie Lisenby" },
  { icon: "marker", title: "Birth: Invercargill, New Zealand, (1933)", sub: "Theodore McBride" },
  { icon: "marker", title: "Marriage: Rotterdam, Netherlands, (1953)", sub: "Theodore McBride" },
  { icon: "marker", title: "Birth: Leiden, Netherlands, (1889)", sub: "Yvone Wasinger" },
  { icon: "marker", title: "Birth: Kathmandu,  Nepal, (1883)" },
];

function Search() {
  return (
    <div className="px-[12px] pt-[12px]">
      <div className="h-[72px] bg-[#e0faff] px-[12px]">
        <div className="flex h-[72px] items-center border-b border-[#bcd9dc] pl-[12px] pr-[20px]">
          <span className="text-[27px] text-[#222]">and</span>
          <svg viewBox="0 0 20 20" className="ml-auto size-[20px]" stroke="#666" strokeWidth="2.800">
            <path d="M1 1l18 18M19 1L1 19" />
          </svg>
        </div>
      </div>
      <div className="pl-[3px] pt-[16px]">
        {results.map((r) => (
          <ListItem key={r.title} item={r} tall />
        ))}
      </div>
    </div>
  );
}

/* ---------- page ---------- */

export default function App() {
  return (
    <main className="h-[3300px] w-[2550px] overflow-hidden bg-white font-[Roboto,sans-serif] text-black">
      <header className="h-[560px] pl-[149px] pt-[124px] font-[Lato,sans-serif]">
        <h1 className="h-[89px] text-[72px] leading-[88px]">
          <FitText width={546}>Family Map App</FitText>
        </h1>
        <div className="flex flex-col items-start text-[58px] leading-[80px]">
          <FitText width={2108}>The app connects to the server I devoloped and draws an interactive map that</FitText>
          <FitText width={2232}>displays life events of family ancestors. When a person is selected, it displays his or</FitText>
          <FitText width={2236}>her events and family. You can filter which type of events are shown, change colors</FitText>
          <FitText width={1203}>of the lines, and search for events or people.</FitText>
        </div>
      </header>

      <div className="flex h-[1290px] items-start">
        <Activity title="Login Activity" width={540} className="ml-[164px] w-[615px]" titleClass="pl-[35px] pt-[5px]">
          <Phone size="w-[615px] h-[1092px]" time="12:34" title="Family Map">
            <Login />
          </Phone>
        </Activity>
        <Activity title="Map Activity" width={502} className="ml-[191px] w-[616px]" titleClass="pl-[53px] pt-[7px]">
          <Phone
            size="w-[616px] h-[1094px]"
            time="10:59"
            title="Family Map"
            actions={
              <div className="flex items-center gap-[41px] pr-[19px]">
                <SearchIcon />
                <FunnelIcon />
                <GearIcon />
              </div>
            }
          >
            <MapScreen />
          </Phone>
        </Activity>
        <Activity title="Person Activity" width={589} className="ml-[210px] w-[614px]" titleClass="pt-[15px]">
          <Phone
            size="w-[614px] h-[1091px]"
            time="12:57"
            title="Family Map: Person Details"
            back
            actions={
              <div className="pr-[25px]">
                <DoubleUp />
              </div>
            }
          >
            <Person />
          </Phone>
        </Activity>
      </div>

      <div className="flex items-start">
        <Activity title="Settings Activity" width={634} className="ml-[187px] w-[621px]" titleClass="pt-[24px]">
          <Phone size="w-[621px] h-[1101px]" time="1:10" title="Family Map: Settings" back>
            <Settings />
          </Phone>
        </Activity>
        <Activity title="Filter Activity" width={525} className="ml-[162px] w-[617px]" titleClass="pl-[41px] pt-[20px]">
          <Phone size="w-[617px] h-[1097px]" time="1:29" title="Family Map: Filter" back>
            <Filter />
          </Phone>
        </Activity>
        <Activity title="Search Activity" width={602} className="ml-[169px] w-[616px]" titleClass="pl-[4px] pt-[18px]">
          <Phone size="w-[616px] h-[1095px]" time="1:35" title="Family Map: Search" back>
            <Search />
          </Phone>
        </Activity>
      </div>
    </main>
  );
}
